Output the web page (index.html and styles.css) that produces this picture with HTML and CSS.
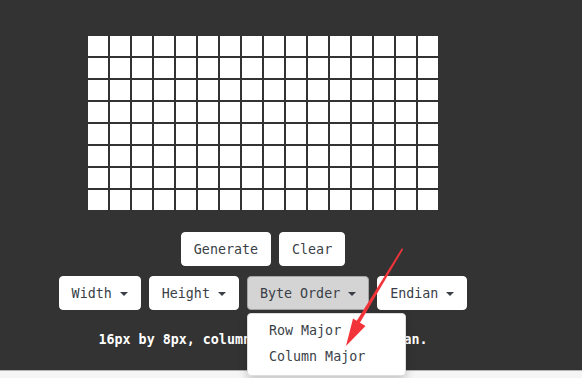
FILE: index.html
```html
<!DOCTYPE html>
<html lang="en">
  <head>
    <meta charset="UTF-8" />
    <title>Bitmap Font Generator</title>
    <link rel="stylesheet" href="styles.css">
  </head>
  <body>
    <div class="app">
      <div class="grid" id="grid"></div>

      <div class="row">
        <button class="btn">Generate</button>
        <button class="btn">Clear</button>
      </div>

      <div class="row">
        <button class="btn">Width <span class="caret"></span></button>
        <button class="btn">Height <span class="caret"></span></button>
        <div class="dropdown">
          <button class="btn active">Byte Order <span class="caret"></span></button>
          <ul class="menu">
            <li>Row Major</li>
            <li>Column Major</li>
          </ul>
        </div>
        <button class="btn">Endian <span class="caret"></span></button>
      </div>

      <p class="info">16px by 8px, column major, little endian.</p>
    </div>

    <div class="code"></div>

    <!-- annotation arrow -->
    <svg class="arrow" width="582" height="378" viewBox="0 0 582 378">
      <polygon points="402,248 403,249.5 358.6,325 355.4,323" fill="#f2343a" />
      <polygon points="346,346 353,318.5 365.5,326" fill="#f2343a" />
    </svg>

    <script>
      const grid = document.getElementById("grid");
      for (let i = 0; i < 16 * 8; i++) {
        const cell = document.createElement("div");
        cell.className = "cell";
        grid.appendChild(cell);
      }
    </script>
  </body>
</html>
```

FILE: styles.css
```css
body {
  margin: 0;
  background: #333;
  font-family: "DejaVu Sans Mono", "Liberation Mono", monospace;
  font-size: 13.33px;
  color: #333;
  overflow: hidden;
}

.app {
  width: 526px;
  height: 370px;
  box-sizing: border-box;
  padding-top: 36px;
  text-align: center;
}

.grid {
  display: grid;
  grid-template-columns: repeat(16, 20px);
  grid-auto-rows: 20px;
  gap: 2px;
  justify-content: center;
}

.cell {
  background: white;
}

.row {
  display: flex;
  justify-content: center;
  gap: 8px;
  margin-top: 22px;
}

.row + .row {
  margin-top: 10px;
}

.btn {
  height: 34px;
  padding: 0 12px;
  background: white;
  border: 1px solid white;
  border-radius: 4px;
  font-family: inherit;
  font-size: 13.33px;
  color: #3a3f47;
  cursor: pointer;
}

.btn.active {
  background: #d4d4d4;
  border-color: #a5a5a5;
}

.caret {
  display: inline-block;
  width: 0;
  height: 0;
  vertical-align: middle;
  border-top: 4px solid;
  border-left: 4px solid transparent;
  border-right: 4px solid transparent;
}

.dropdown {
  position: relative;
}

.menu {
  position: absolute;
  top: 37px;
  left: 0;
  width: 159px;
  box-sizing: border-box;
  margin: 0;
  padding: 4px 0 5px;
  list-style: none;
  background: white;
  border: 1px solid #ddd;
  border-radius: 4px;
  box-shadow: 0 4px 10px rgba(0, 0, 0, 0.2);
  text-align: left;
  z-index: 2;
}

.menu li {
  padding: 0 21px;
  line-height: 26px;
  color: #3a3f47;
}

.info {
  margin: 21px 0 0;
  line-height: 18px;
  color: white;
  font-weight: bold;
}

.code {
  height: 20px;
  background: #f5f5f5;
  border-top: 1px solid #b5b5b5;
}

.arrow {
  position: absolute;
  top: 0;
  left: 0;
  z-index: 3;
  pointer-events: none;
}
```
